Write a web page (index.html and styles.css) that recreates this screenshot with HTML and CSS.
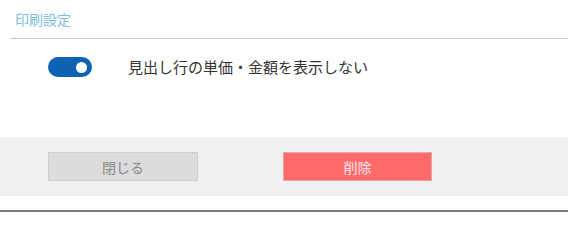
FILE: index.html
```html
<!DOCTYPE html>
<html lang="ja">
<head>
<meta charset="utf-8">
<title>印刷設定</title>
<link rel="stylesheet" href="styles.css">
</head>
<body>
<div class="dialog">
  <div class="header"><span class="title">印刷設定</span></div>
  <div class="content">
    <div class="row">
      <span class="toggle"><span class="knob"></span></span>
      <span class="label">見出し行の単価・金額を表示しない</span>
    </div>
  </div>
  <div class="footer">
    <button class="btn btn-close">閉じる</button>
    <button class="btn btn-delete">削除</button>
  </div>
  <div class="spacer"></div>
</div>
</body>
</html>
```
FILE: styles.css
```css
html, body {
  margin: 0;
  padding: 0;
  background: #ffffff;
}
body {
  font-family: "Noto Sans CJK JP", "Noto Sans", sans-serif;
  width: 568px;
  height: 212px;
  overflow: hidden;
}
.dialog {
  display: flex;
  flex-direction: column;
}
.header {
  margin-left: 10px;
  height: 38px;
  border-bottom: 1px solid #c4c4c4;
  display: flex;
  align-items: center;
  padding-left: 5px;
}
.title {
  font-size: 14px;
  color: #7cbcdc;
  line-height: 20px;
}
.content {
  height: 98px;
}
.row {
  display: flex;
  align-items: center;
  padding-top: 17px;
  padding-left: 48px;
}
.toggle {
  width: 44px;
  height: 20px;
  border-radius: 10px;
  background: #0b63b2;
  display: flex;
  align-items: center;
  justify-content: flex-end;
  padding-right: 5px;
  box-sizing: border-box;
}
.knob {
  width: 11px;
  height: 11px;
  border-radius: 50%;
  background: #ffffff;
}
.label {
  margin-left: 36px;
  font-size: 15px;
  color: #333333;
  line-height: 22px;
}
.footer {
  height: 59px;
  background: #f0f0f0;
  display: flex;
  align-items: center;
  padding-left: 48px;
  gap: 85px;
}
.btn {
  width: 150px;
  height: 29px;
  font-family: "Noto Sans CJK JP", "Noto Sans", sans-serif;
  font-size: 14px;
  padding: 0;
  margin: 0;
  box-sizing: border-box;
}
.btn-close {
  background: #dcdcdc;
  border: 1px solid #cfcfcf;
  color: #8a8a8a;
}
.btn-delete {
  width: 149px;
  background: #ff6b6b;
  border: 1px solid #e3a5a5;
  color: #ffe6ea;
}
.spacer {
  height: 14px;
  border-bottom: 2px solid #7a7a7a;
}
```
